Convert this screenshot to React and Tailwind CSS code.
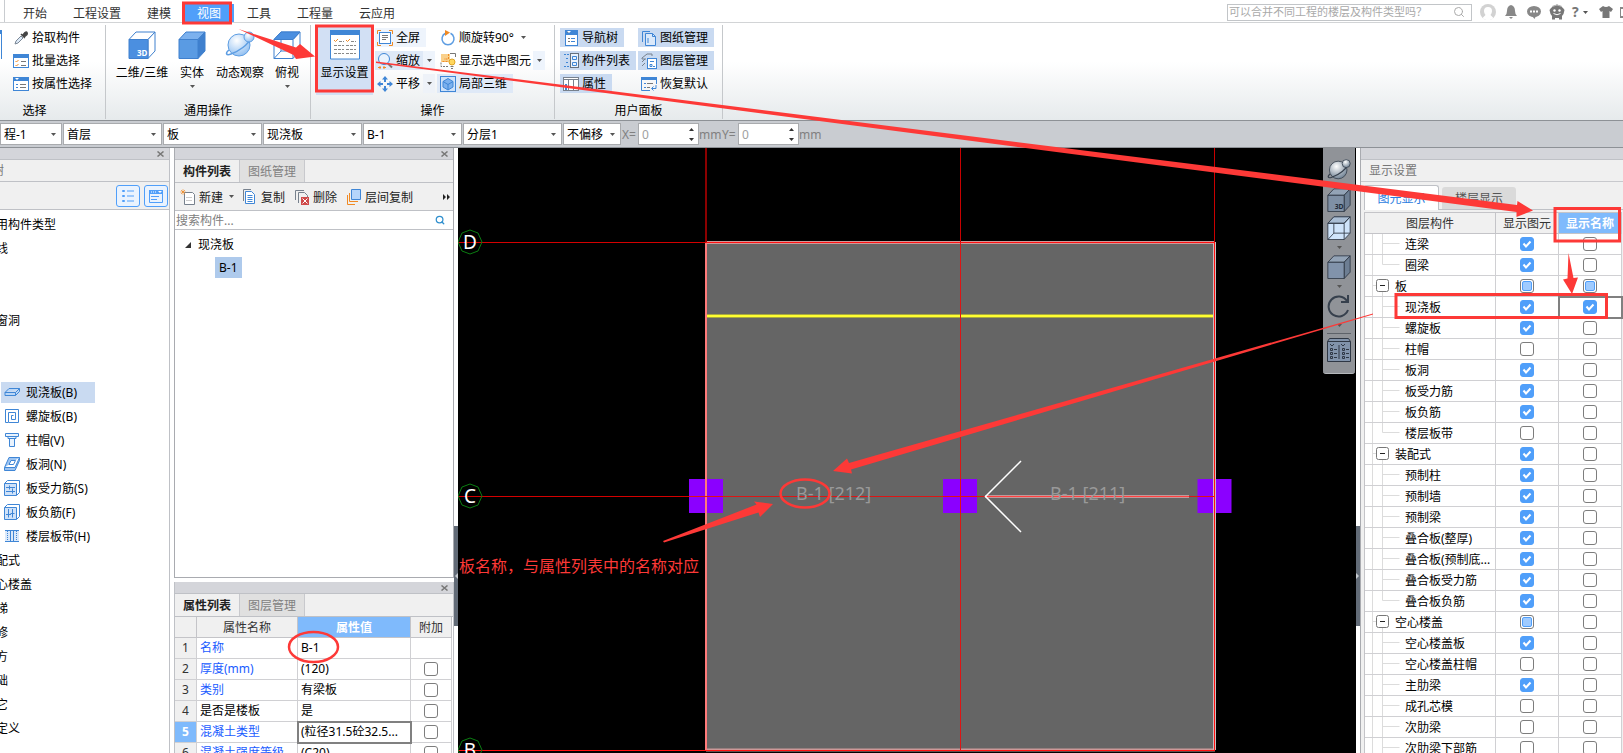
import React from "react";
import { Search } from "lucide-react";

const RED = "#fd3937";

/* ---------- small shared pieces ---------- */

const Ico = ({ s = 16, box = 16, children }) => (
  <svg
    width={s}
    height={s}
    viewBox={`0 0 ${box} ${box}`}
    fill="none"
    stroke="#3f86d6"
    className="shrink-0"
    aria-hidden="true"
  >
    {children}
  </svg>
);

const Caret = ({ className = "" }) => (
  <svg width="5" height="3" viewBox="0 0 5 3" className={`shrink-0 ${className}`} aria-hidden="true">
    <path d="M0 0h5L2.500 3z" fill="#555" />
  </svg>
);

/* value: "on" | "off" | "part" */
const Tick = ({ value, label }) => (
  <label className="relative mx-auto block size-[14px]">
    <input
      type="checkbox"
      aria-label={label}
      defaultChecked={value === "on"}
      className="peer block size-[14px] appearance-none rounded-[3px] border border-[#7d7d7d] bg-white checked:border-[#509ffa] checked:bg-[#509ffa]"
    />
    <svg
      viewBox="0 0 14 14"
      className="pointer-events-none absolute inset-0 hidden size-[14px] peer-checked:block"
      aria-hidden="true"
    >
      <path d="M3.500 6.500l2.500 3 4.500-5" fill="none" stroke="#fff" strokeWidth="2" />
    </svg>
    {value === "part" && (
      <span className="pointer-events-none absolute inset-[2px] rounded-[2px] border border-[#509ffa] bg-[#9fcbff]" />
    )}
  </label>
);

/* ---------- icons ---------- */

const Dropper = () => (
  <Ico>
    <path d="M2 14l1-3 5-5 2 2-5 5z" fill="#dce9f7" stroke="#7c8896" />
    <path d="M8 4l4 4M9.500 5.500L12 2.500q1.500-1 2 .0t0 2L11 7z" fill="#444" stroke="#444" strokeWidth="1.500" />
  </Ico>
);

const BatchPick = () => (
  <Ico>
    <rect x=".5" y="1.500" width="15" height="13" fill="#fff" />
    <rect x="0" y="1" width="16" height="4" fill="#3f86d6" stroke="none" />
    <path d="M2.500 8l1 1 2-2M2.500 12l1 1 2-2" stroke="#f08a24" />
    <path d="M8 8.500h5M8 12.500h5" stroke="#777" />
  </Ico>
);

const PropPick = () => (
  <Ico>
    <rect x=".5" y="1.500" width="15" height="13" fill="#fff" />
    <rect x="0" y="1" width="16" height="4" fill="#3f86d6" stroke="none" />
    <path d="M2 2h4L4 4z" fill="#fff" stroke="none" />
    <path d="M3 8.500h2M3 11.500h2" />
    <path d="M7 8.500h6M7 11.500h6" stroke="#777" />
  </Ico>
);

const Cube = ({ s = 28, front = "#5a9be3", side = "#3f80ce", top = "#7cb1ee", line = "#3f80ce", text, textColor = "#fff" }) => (
  <svg width={s} height={s} viewBox="0 0 28 28" className="shrink-0" aria-hidden="true">
    <path d="M1 8.500L8 1h19l-7 7.500z" fill={top} stroke={line} />
    <path d="M20 8.500L27 1v19l-7 7.500z" fill={side} stroke={line} />
    <path d="M1 8.500h19v19H1z" fill={front} stroke={line} />
    {text && (
      <text x="9" y="25" fontSize="8" fontWeight="700" fill={textColor}>
        {text}
      </text>
    )}
  </svg>
);

const WireCube = ({ s = 28, line = "#3f80ce", fill = "#fff", top = "#4b8fe0" }) => (
  <svg width={s} height={s} viewBox="0 0 28 28" fill="none" stroke={line} className="shrink-0" aria-hidden="true">
    <path d="M1 8.500L8 1h19v19l-7 7.500H1z" fill={fill} />
    <path d="M1 8.500L8 1h19l-7 7.500z" fill={top} />
    <path d="M1 8.500h19v19M8 9v11h12M8 20l-7 7.500M20 8.500L27 1M20 20h7" />
  </svg>
);

const Orbit = ({ s = 30, dark = false }) => (
  <svg width={s} height={s} viewBox="0 0 30 30" fill="none" className="shrink-0" aria-hidden="true">
    <defs>
      <radialGradient id={dark ? "orbD" : "orbL"} cx=".4" cy=".3" r=".8">
        <stop offset="0" stopColor="#fff" />
        <stop offset="1" stopColor={dark ? "#5f7387" : "#86b9f0"} />
      </radialGradient>
    </defs>
    <circle cx="14" cy="15" r="11" fill={dark ? "url(#orbD)" : "url(#orbL)"} stroke={dark ? "#36404d" : "#5d9de2"} />
    <path d="M4 20c-4 3-3 6 2 4 8-3 17-9 20-16" stroke={dark ? "#36404d" : "#5d9de2"} strokeWidth="1.500" />
    <circle cx="24" cy="7" r="5" fill={dark ? "url(#orbD)" : "url(#orbL)"} stroke={dark ? "#36404d" : "#5d9de2"} />
  </svg>
);

const DisplaySetup = () => (
  <svg width="30" height="30" viewBox="0 0 30 30" fill="none" className="shrink-0" aria-hidden="true">
    <path d="M.5 1h29v28H.5z" fill="#fff" stroke="#3f86d6" />
    <path d="M0 0h30v5H0z" fill="#3f86d6" />
    <path d="M4 10l1.500 1.500L8 9M16 10l1.500 1.500L20 9" stroke="#f08a24" />
    <path d="M9 11.500h5M21 11.500h5M4 15.500h10M16 15.500h10M4 19.500h10M16 19.500h10M4 23.500h10M16 23.500h10" stroke="#888" strokeDasharray="3 1" />
  </svg>
);

const FullScreen = () => (
  <Ico>
    <path d="M.5 4V.5H4M12 .5h3.500V4M15.500 12v3.500H12M4 15.500H.5V12" stroke="#f08a24" />
    <rect x="2.500" y="2.500" width="11" height="11" fill="#fff" />
    <path d="M5 5.500h6M5 7.500h6M5 9.500h4" stroke="#777" />
  </Ico>
);
const Zoomer = () => (
  <Ico>
    <circle cx="7" cy="6" r="5.500" fill="#eaf3fd" />
    <path d="M11 10.500l4 4" stroke="#777" strokeWidth="2" />
    <path d="M1 14.500h3M6 14.500h3M3 13v3M7 13v3" stroke="#f08a24" />
  </Ico>
);
const Pan = () => (
  <Ico>
    <path d="M8 0l3 3.500H5zM8 16l3-3.500H5zM0 8l3.500-3v6zM16 8l-3.500-3v6z" fill="#3f86d6" stroke="none" />
    <path d="M8 3v3M8 10v3M3 8h3M10 8h3" strokeWidth="2" />
  </Ico>
);
const Rotate = () => (
  <Ico>
    <path d="M10.500 3.300a6 6 0 1 1-5 0" strokeWidth="1.500" stroke="#5d9de2" />
    <path d="M5 0l5 2.500L5 6z" fill="#f08a24" stroke="none" />
  </Ico>
);
const ShowPicked = () => (
  <Ico>
    <path d="M1 9.500v4h8" stroke="#777" strokeDasharray="2 1" />
    <path d="M1 1h9v8H1z" fill="#f9d08b" stroke="none" />
    <path d="M8.500 1v5H4M2.500 8.500h5" stroke="#f08a24" strokeDasharray="2 1" />
    <path d="M10 .5h5.500V4" stroke="#777" />
    <circle cx="12" cy="9" r="3" fill="#ffd75e" stroke="#e0a526" />
    <path d="M10.500 13.500h3M11 15.500h2" stroke="#777" />
  </Ico>
);
const Local3d = () => (
  <Ico>
    <rect x=".5" y=".5" width="15" height="15" fill="#cfe2f9" />
    <path d="M8 2.500l5 3v5.500l-5 3-5-3V5.500z" fill="#7cb1ee" />
    <path d="M3 5.500l5 3 5-3M8 8.500V14" />
  </Ico>
);
const NavTree = () => (
  <Ico>
    <rect x="2.500" y=".5" width="12" height="15" fill="#fff" />
    <rect x="2" y="0" width="13" height="5" fill="#3f86d6" stroke="none" />
    <path d="M4 2h2M5 8.500h2M5 11.500h2" stroke="#777" />
    <path d="M8 8.500h4M8 11.500h4" />
    <path d="M4 1h4L6 3z" fill="#fff" stroke="none" />
  </Ico>
);
const PartList = () => (
  <Ico>
    <path d="M1 1.500h5M3 5.500h3M3 9.500h3M1 13.500h5" strokeDasharray="2 1" />
    <rect x="7.500" y=".5" width="8" height="14" fill="#eaf3fd" stroke="#66717e" />
    <path d="M9.500 3.500h4v3h-4zM9.500 9.500h4v3h-4z" stroke="#3f86d6" />
  </Ico>
);
const PropIcon = () => (
  <Ico>
    <rect x=".5" y="1.500" width="15" height="13" fill="#fff" stroke="#77818d" />
    <path d="M0 3.500h16M5.500 4v10M10.500 4v10" stroke="#77818d" />
    <path d="M3 8v6" strokeWidth="2" />
  </Ico>
);
const Sheets = () => (
  <Ico>
    <path d="M1.500 12V1.500H9" />
    <path d="M4.500 3.500h7l3 3v9h-10z" fill="#dbe9fa" />
    <path d="M11.500 3.500v3h3M7 8v5" />
  </Ico>
);
const Layers = () => (
  <Ico>
    <path d="M1 5l5-4h5v2M1 9l3-3M1 13l3-3M1 5v1h4" stroke="#77818d" />
    <rect x="6.500" y="5.500" width="9" height="10" fill="#fff" />
    <path d="M9 8.500h4M9 11.500h2v2H9zM12 13.500h2" />
  </Ico>
);
const Restore = () => (
  <Ico>
    <path d="M.5 14.500v-13h15V8" />
    <path d="M0 1h16v3H0z" fill="#3f86d6" stroke="none" />
    <path d="M3 7.500h2M3 11.500h2M.5 14.500H9" />
    <path d="M6 7.500h6M6 11.500h3" stroke="#777" />
    <path d="M15 9v3.500h-4M12.500 10.500l-2 2 2 2" />
  </Ico>
);

/* ---------- top tabs ---------- */

const TABS = ["开始", "工程设置", "建模", "视图", "工具", "工程量", "云应用"];

const TopBar = () => (
  <header className="flex h-[23px] shrink-0 items-end border-b border-[#d2d4d6] bg-white pl-1">
    <nav className="flex h-full items-end border-l border-[#c9ccd0] pl-[5px]">
      {TABS.map((t) => (
        <button
          key={t}
          className={
            t === "视图"
              ? "h-[18px] bg-[#509ffa] px-[13px] pt-px leading-[17px] text-white"
              : "h-[18px] px-[13px] pt-px leading-[17px] text-[#333]"
          }
        >
          {t}
        </button>
      ))}
    </nav>

    <div className="ml-auto flex h-full items-center pt-0.5">
      <label className="mr-2 flex h-[17px] w-[245px] items-center border border-[#c2c5c8] pr-1.5 pl-px">
        <input
          aria-label="搜索"
          placeholder="可以合并不同工程的楼层及构件类型吗？"
          className="min-w-0 flex-1 text-[11px] leading-[14px] outline-none placeholder:text-[#a9a9a9]"
        />
        <Search size={12} color="#aaa" />
      </label>

      <div className="flex items-center gap-[7px]">
        <svg width="16" height="16" viewBox="0 0 16 16" aria-hidden="true">
          <circle cx="8" cy="8" r="8" fill="#d2d2d2" />
          <path d="M4 7a4 4 0 0 1 8 0c0 2-1 3-1.500 4l3 3a8 8 0 0 1-11 0l3-3C5 10 4 9 4 7z" fill="#fff" />
        </svg>
        <svg width="16" height="16" viewBox="0 0 16 16" fill="#888" aria-hidden="true">
          <path d="M8 1q4 1 4 6 0 3 2 5H2q2-2 2-5 0-5 4-6zM6 13h4l-2 2z" />
        </svg>
        <svg width="16" height="16" viewBox="0 0 16 16" aria-hidden="true">
          <ellipse cx="8" cy="7.500" rx="7" ry="5.500" fill="#888" />
          <path d="M6 12l2.500 3 1.500-3z" fill="#888" />
          <path d="M4 6.500h2v2H4zM7 6.500h2v2H7zM10 6.500h2v2h-2z" fill="#fff" />
        </svg>
        <svg width="16" height="16" viewBox="0 0 16 16" aria-hidden="true">
          <path d="M2 4q6-7 12 0l1.500 2-1 4-1.500 2v3.500h-3V14H6v1.500H3V12L1.500 10 .5 6z" fill="#777" />
          <path d="M3 2.500q5-3 10 0" stroke="#bbb" fill="none" />
          <circle cx="5.500" cy="6.500" r="1.200" fill="#fff" />
          <circle cx="10.500" cy="6.500" r="1.200" fill="#fff" />
          <path d="M4.500 9.500q3.500 2.500 7 0" stroke="#fff" fill="none" />
        </svg>
        <span className="flex w-4 items-center gap-1 text-[14px] font-bold leading-4 text-[#777]">
          ?<Caret />
        </span>
        <svg width="14" height="14" viewBox="0 0 14 14" fill="#777" className="ml-1" aria-hidden="true">
          <path d="M4 1q3 2 6 0l4 3-2 3-1.500-1v7h-7V6L2 7 0 4z" />
        </svg>
        <span className="h-[11px] w-[3px] border-y-2 border-l border-[#888]" />
      </div>
    </div>
  </header>
);

/* ---------- ribbon ---------- */

const Group = ({ title, className, children }) => (
  <section className={`flex shrink-0 flex-col border-r border-[#c5c8cb] ${className}`}>
    <div className="flex h-[78px]">{children}</div>
    <h2 className="text-center leading-4">{title}</h2>
  </section>
);

const BigBtn = ({ icon, label, caret, className = "" }) => (
  <button className={`flex flex-col items-center ${className}`}>
    <span className="flex h-10 items-center justify-center">{icon}</span>
    <span className="leading-4 whitespace-nowrap">{label}</span>
    {caret && <Caret className="mt-1" />}
  </button>
);

const SmallBtn = ({ icon, label, className = "" }) => (
  <button className={`flex h-[19px] items-center gap-[3px] leading-[19px] whitespace-nowrap ${className}`}>
    {icon}
    {label}
  </button>
);

const DropBtn = ({ label, className = "" }) => (
  <button aria-label={label} className={`flex h-[19px] w-3 items-center justify-center ${className}`}>
    <Caret />
  </button>
);

const Ribbon = () => (
  <div className="flex h-[97px] shrink-0 bg-linear-to-b from-white from-40% to-[#e6eaec] pt-0.5 pb-px">
    <Group title="选择" className="w-[106px] pr-9">
      <span className="mt-[5px] h-[29px] w-0.5 shrink-0 border-t-4 border-r border-[#3f86d6] bg-white" />
      <div className="flex flex-col gap-1 pt-[3px] pl-[11px]">
        <SmallBtn icon={<Dropper />} label="拾取构件" />
        <SmallBtn icon={<BatchPick />} label="批量选择" />
        <SmallBtn icon={<PropPick />} label="按属性选择" />
      </div>
    </Group>

    <Group title="通用操作" className="w-[205px]">
      <BigBtn className="ml-[9px] w-[54px]" icon={<Cube front="#4b8fe0" side="#fff" top="#fff" text="3D" />} label="二维/三维" />
      <BigBtn className="ml-[9px] w-[28px]" icon={<Cube />} label="实体" caret />
      <BigBtn className="ml-[9px] w-[50px]" icon={<Orbit />} label="动态观察" />
      <BigBtn className="ml-[8px] w-[28px]" icon={<WireCube />} label="俯视" caret />
    </Group>

    <Group title="操作" className="w-[244px]">
      <BigBtn className="ml-[5px] h-[70px] w-[57px] bg-[#d2e0f4]" icon={<DisplaySetup />} label="显示设置" />
      <div className="ml-0.5 flex w-[60px] flex-col gap-1 pt-[3px]">
        <SmallBtn className="w-[51px] bg-[#eef4fc] pl-0.5" icon={<FullScreen />} label="全屏" />
        <div className="flex">
          <SmallBtn className="w-12 bg-[#dfe9f7] pl-0.5" icon={<Zoomer />} label="缩放" />
          <DropBtn label="缩放选项" className="bg-[#eef4fc]" />
        </div>
        <div className="flex">
          <SmallBtn className="w-12 pl-0.5" icon={<Pan />} label="平移" />
          <DropBtn label="平移选项" className="bg-[#eef2f8]" />
        </div>
      </div>
      <div className="ml-0.5 flex flex-col gap-1 pt-[3px]">
        <div className="flex">
          <SmallBtn className="pl-[3px]" icon={<Rotate />} label="顺旋转90°" />
          <DropBtn label="旋转选项" className="ml-1" />
        </div>
        <div className="flex">
          <SmallBtn className="w-[96px] pl-[3px]" icon={<ShowPicked />} label="显示选中图元" />
          <DropBtn label="图元选项" className="bg-[#eef4fc]" />
        </div>
        <SmallBtn className="w-[76px] bg-[#dfe9f7] pl-[3px]" icon={<Local3d />} label="局部三维" />
      </div>
    </Group>

    <Group title="用户面板" className="w-[168px]">
      <div className="ml-[5px] flex w-[78px] flex-col items-start gap-1 pt-[3px]">
        <SmallBtn className="bg-[#c9daf1] pr-[6px] pl-[3px]" icon={<NavTree />} label="导航树" />
        <SmallBtn className="bg-[#c9daf1] pr-[6px] pl-[3px]" icon={<PartList />} label="构件列表" />
        <SmallBtn className="bg-[#c9daf1] pr-[6px] pl-[3px]" icon={<PropIcon />} label="属性" />
      </div>
      <div className="flex flex-col items-start gap-1 pt-[3px]">
        <SmallBtn className="bg-[#c9daf1] pr-[6px] pl-[3px]" icon={<Sheets />} label="图纸管理" />
        <SmallBtn className="bg-[#c9daf1] pr-[6px] pl-[3px]" icon={<Layers />} label="图层管理" />
        <SmallBtn className="pr-[6px] pl-[3px]" icon={<Restore />} label="恢复默认" />
      </div>
    </Group>
  </div>
);

/* ---------- option bar ---------- */

const Pick = ({ label, value, className = "w-[99px]" }) => (
  <label className={`relative mr-px block shrink-0 ${className}`}>
    <select
      aria-label={label}
      className="block h-[22px] w-full appearance-none border border-[#a9abae] bg-white pt-px pl-[3px] leading-[19px] outline-none"
    >
      <option>{value}</option>
    </select>
    <Caret className="pointer-events-none absolute top-[10px] right-[6px]" />
  </label>
);

const Offset = ({ axis }) => (
  <label className="flex items-center text-[#808080]">
    <span className="w-4 pt-px whitespace-nowrap">{axis}=</span>
    <span className="flex h-[22px] w-[61px] items-center border border-[#a9abae] bg-white pr-1 pl-[3px]">
      <input defaultValue="0" disabled className="w-0 min-w-0 flex-1 pt-px text-[#a0a0a0]" />
      <svg width="5" height="13" viewBox="0 0 5 13" fill="#333" aria-hidden="true">
        <path d="M0 3h5L2.500 0zM0 10h5L2.500 13z" />
      </svg>
    </span>
    <span className="w-[23px] pt-px">mm</span>
  </label>
);

const OptionBar = () => (
  <div className="flex h-7 shrink-0 items-center overflow-hidden border-y border-[#8d9196] bg-[#c9ccd1]">
    <Pick label="工程" value="程-1" className="w-[62px]" />
    <Pick label="楼层" value="首层" />
    <Pick label="类别" value="板" />
    <Pick label="类型" value="现浇板" />
    <Pick label="构件" value="B-1" />
    <Pick label="分层" value="分层1" />
    <Pick label="偏移" value="不偏移" className="w-[58px]" />
    <Offset axis="X" />
    <Offset axis="Y" />
  </div>
);

/* ---------- left navigation ---------- */

const Slab = () => (
  <Ico><path d="M1 8.500l4-4h10.500v3l-4 4H1zM1 8.500h10.500l4-4M11.500 8.500v3" fill="#b9d6f7" /></Ico>
);
const Spiral = () => (
  <Ico>
    <path d="M4 14.500H1.500v-13h13v13H4.500V4.500h7v7H7.500v-4h2" />
  </Ico>
);
const Cap = () => (
  <Ico><path d="M1.500 1.500h13v3h-13zM4 4.500v2h8v-2M5.500 6.500v8h5v-8" fill="#eaf3fd" /></Ico>
);
const Hole = () => (
  <Ico>
    <path d="M5 1.500h10.500L11 11.500H.5zM.5 11.500v3H11l4.500-10v-3" fill="#9cc4f2" />
    <path d="M7 4.500h4.500l-2 4H5z" fill="#fff" />
  </Ico>
);
const BarS = () => (
  <Ico>
    <path d="M.5 3.500l3-3h12v12l-3 3" />
    <path d="M.5 3.500h12v12H.5z" fill="#cfe2f9" />
    <path d="M2 7.500h9M2 11.500h9M5.500 5.500v4M8.500 8.500v5" />
  </Ico>
);
const BarF = () => (
  <Ico>
    <path d="M.5 3.500l3-3h12v12l-3 3" />
    <path d="M.5 3.500h12v12H.5z" fill="#cfe2f9" />
    <path d="M4.500 5v8.500M8.500 5v8.500M2 10.500h5M6.500 9.500h4" />
  </Ico>
);
const Band = () => (
  <Ico>
    <path d="M1 2.500h14v11H1z" fill="#dbe9fa" stroke="none" />
    <path d="M1 2.500h14M1 13.500h14M6.500 3v10M9.500 3v10" />
    <path d="M3.500 3v10M12.500 3v10" strokeDasharray="1 1" />
  </Ico>
);

const NAV = [
  { t: "用构件类型" },
  { t: "线" },
  {},
  {},
  { t: "窗洞" },
  {},
  {},
  { t: "现浇板(B)", icon: <Slab />, on: true },
  { t: "螺旋板(B)", icon: <Spiral /> },
  { t: "柱帽(V)", icon: <Cap /> },
  { t: "板洞(N)", icon: <Hole /> },
  { t: "板受力筋(S)", icon: <BarS /> },
  { t: "板负筋(F)", icon: <BarF /> },
  { t: "楼层板带(H)", icon: <Band /> },
  { t: "配式" },
  { t: "心楼盖" },
  { t: "梯" },
  { t: "修" },
  { t: "方" },
  { t: "础" },
  { t: "它" },
  { t: "定义" },
];

const CloseStrip = () => (
  <div className="flex h-3 shrink-0 items-center justify-end border-b border-[#bfc1c6] bg-[#d4d5da] pr-[5px]">
    <button aria-label="关闭">
      <svg width="7" height="6" viewBox="0 0 7 6" stroke="#777" strokeWidth="1.500" aria-hidden="true">
        <path d="M.5.5l6 5M6.500.5l-6 5" />
      </svg>
    </button>
  </div>
);

const NavPanel = () => (
  <aside className="flex w-[170px] shrink-0 flex-col overflow-hidden border-r border-[#bfc1c6] bg-white">
    <CloseStrip />
    <div className="h-[22px] shrink-0 border-b border-[#bfc1c6] bg-[#f0f0f0] leading-[22px] text-[#777]">
      <span className="-ml-2 inline-block">树</span>
    </div>
    <div className="flex h-7 shrink-0 items-center justify-end gap-1 border-b border-[#bfc1c6] bg-[#f0f0f0] pr-px">
      <button aria-label="列表视图" className="grid h-[22px] w-6 place-items-center rounded-[3px] border border-[#509ffa] bg-[#eaf3fe]">
        <Ico>
          <path d="M2.500 2.500h2v1h-2zM2.500 7.500h2v1h-2zM2.500 12.500h2v1h-2zM7 3h7M7 8h7M7 13h7" stroke="#509ffa" />
        </Ico>
      </button>
      <button aria-label="卡片视图" className="grid h-[22px] w-6 place-items-center rounded-[3px] border border-[#509ffa] bg-[#eaf3fe]">
        <Ico>
          <path d="M1.500 2.500h13v12h-13z" stroke="#509ffa" />
          <path d="M1 2h14v4H1z" fill="#509ffa" stroke="none" />
          <path d="M3 4h1M5 4h1M7 4h1" stroke="#fff" />
          <path d="M10 3h4l-2 2z" fill="#fff" stroke="none" />
          <path d="M3 8.500h8M3 11.500h6" stroke="#509ffa" />
        </Ico>
      </button>
    </div>
    <ul className="pt-0.5">
      {NAV.map((n, i) => (
        <li key={i} className="flex h-6 items-center pl-px whitespace-nowrap">
          {n.icon ? (
            <button
              className={`flex h-[21px] items-center gap-[6px] pl-[3px] ${n.on ? "w-[94px] bg-[#c9daf1]" : ""}`}
            >
              {n.icon}
              <span className="pt-0.5">{n.t}</span>
            </button>
          ) : (
            <span className="-ml-[5px] pt-0.5">{n.t}</span>
          )}
        </li>
      ))}
    </ul>
  </aside>
);

/* ---------- component list + property list ---------- */

const PanelTabs = ({ tabs }) => (
  <div className="flex h-[23px] shrink-0 border-b border-[#bfc1c6] bg-[#f0f0f0]">
    {tabs.map((t, i) => (
      <button
        key={t}
        className={
          i === 0
            ? "w-[65px] border-r border-[#c8c9cd] pt-px font-bold text-[#222]"
            : "w-[65px] border-r border-[#c8c9cd] bg-[#e0e0e0] pt-px text-[#808080]"
        }
      >
        {t}
      </button>
    ))}
  </div>
);

const ToolBtn = ({ icon, label, className = "" }) => (
  <button className={`flex items-center gap-[3px] whitespace-nowrap text-[#222] ${className}`}>
    {icon}
    <span className="pt-0.5">{label}</span>
  </button>
);

const ComponentList = () => (
  <section className="flex h-[430px] shrink-0 flex-col border border-t-0 border-[#a9abb0] bg-white">
    <CloseStrip />
    <PanelTabs tabs={["构件列表", "图纸管理"]} />
    <div className="flex h-7 shrink-0 items-center border-b border-[#bfc1c6] bg-[#f0f0f0] pl-[5px]">
      <ToolBtn
        label="新建"
        icon={
          <Ico>
            <path d="M4.500 3.500h8l2 2v10h-10z" fill="#fff" stroke="#77818d" />
            <path d="M6 8.500h6M6 11.500h6" stroke="#ccc" />
            <path d="M3 .5v5M.5 3h5M1 1l4 4M5 1L1 5" stroke="#f08a24" strokeDasharray="1 .5" />
          </Ico>
        }
      />
      <Caret className="mx-[6px]" />
      <ToolBtn
        className="ml-0.5"
        label="复制"
        icon={
          <Ico>
            <path d="M1.500 12V.5H9" stroke="#77818d" />
            <path d="M3.500 2.500h6l3 3v9h-9z" fill="#fff" />
            <path d="M5.500 6.500h5M5.500 8.500h5M5.500 10.500h5M5.500 12.500h5" />
          </Ico>
        }
      />
      <ToolBtn
        className="ml-[9px]"
        label="删除"
        icon={
          <Ico>
            <path d="M1.500 11V1.500H10M4.500 14V3.500h6l3 3V8" stroke="#77818d" />
            <path d="M7 8h8v8H7z" fill="#cf4a4a" stroke="none" />
            <path d="M8.500 9.500l5 5M13.500 9.500l-5 5" stroke="#fff" />
          </Ico>
        }
      />
      <ToolBtn
        className="ml-[9px]"
        label="层间复制"
        icon={
          <Ico>
            <path d="M1.500 6v9.500H9M3.500 4v8.500H12" stroke="#f08a24" />
            <path d="M5.500.5h9v10h-9z" fill="#b5d5fb" />
          </Ico>
        }
      />
      <svg width="7" height="6" viewBox="0 0 7 6" fill="#222" className="mr-[3px] ml-auto" aria-hidden="true">
        <path d="M0 0l3 3-3 3zM4 0l3 3-3 3z" />
      </svg>
    </div>
    <label className="flex h-[19px] shrink-0 items-center border-b border-[#bfc1c6] pr-2 pl-px">
      <input
        aria-label="搜索构件"
        placeholder="搜索构件..."
        className="min-w-0 flex-1 pt-0.5 outline-none placeholder:text-[#808080]"
      />
      <Search size={10} color="#2f8fce" strokeWidth={3} />
    </label>
    <div className="pt-[3px]">
      <div className="flex h-6 items-center gap-[7px] pl-[10px]">
        <svg width="6" height="6" viewBox="0 0 6 6" aria-hidden="true">
          <path d="M6 0v6H0z" fill="#333" />
        </svg>
        现浇板
      </div>
      <div className="flex h-6 items-start pl-10">
        <span className="h-[21px] bg-[#aecaec] px-1 leading-[21px]">B-1</span>
      </div>
    </div>
  </section>
);

const PROPS = [
  { n: "名称", v: "B-1", blue: true, none: true },
  { n: "厚度(mm)", v: "(120)", blue: true },
  { n: "类别", v: "有梁板", blue: true },
  { n: "是否是楼板", v: "是" },
  { n: "混凝土类型", v: "(粒径31.5砼32.5...", blue: true, on: true },
  { n: "混凝土强度等级", v: "(C20)", blue: true },
];

const PropertyList = () => (
  <section className="mt-1 flex min-h-0 flex-1 flex-col overflow-hidden border border-y-0 border-[#bfc1c6] bg-white">
    <CloseStrip />
    <PanelTabs tabs={["属性列表", "图层管理"]} />
    <table className="w-[277px] table-fixed border-separate border-spacing-0">
      <colgroup>
        <col className="w-[22px]" />
        <col className="w-[101px]" />
        <col className="w-[113px]" />
        <col className="w-[41px]" />
      </colgroup>
      <thead>
        <tr className="h-[21px] bg-[#f0f0f0] text-[#333] [&>th]:border-r [&>th]:border-b [&>th]:border-[#c4c4c8] [&>th]:p-0 [&>th]:pt-px [&>th]:leading-4 [&>th]:font-normal">
          <th />
          <th>属性名称</th>
          <th className="bg-[#7fbafc] text-white">
            <b>属性值</b>
          </th>
          <th>附加</th>
        </tr>
      </thead>
      <tbody>
        {PROPS.map((p, i) => (
          <tr
            key={p.n}
            className="h-[21px] [&>td]:border-r [&>td]:border-b [&>td]:border-[#d0d0d3] [&>td]:p-0 [&>td]:leading-4 [&>td]:whitespace-nowrap"
          >
            <td className={p.on ? "bg-[#7fbafc] text-center font-bold text-white" : "bg-[#f0f0f0] text-center text-[#333]"}>
              {i + 1}
            </td>
            <td className={p.blue ? "text-[#1a5cff]" : ""}>
              <span className="pl-[3px]">{p.n}</span>
            </td>
            <td className={p.on ? "outline-2 -outline-offset-1 outline-[#808080]" : ""}>
              <span className="pl-[3px]">{p.v}</span>
            </td>
            <td>{!p.none && <Tick value="off" label={`附加 ${p.n}`} />}</td>
          </tr>
        ))}
      </tbody>
    </table>
  </section>
);

/* ---------- drawing area ---------- */

const AxisMark = ({ y, name }) => (
  <g>
    <path
      d={`M12 ${y - 12}l8 3 4 9-4 9-8 3-8-3-4-9 4-9z`}
      fill="none"
      stroke="#0b7d12"
    />
    <text x="12" y={y + 7} fontSize="19" fill="#fff" textAnchor="middle">
      {name}
    </text>
  </g>
);

const Model = () => (
  <svg className="absolute inset-0 size-full" aria-label="楼板平面">
    <rect x="248" y="94" width="509" height="508" fill="#656565" />
    <path d="M248 168h509" stroke="#a8a840" strokeWidth="4" />
    <path d="M248 168h509" stroke="#ffff30" strokeWidth="2" />

    <path d="M231 331h34v34h-34zM485 331h34v34h-34zM739.500 331h34v34h-34z" fill="#8b00ff" />

    {/* slab outline */}
    <path d="M248 94.500h509M248 602h509" stroke="#c99" strokeWidth="3" />
    <path d="M756.500 94v508" stroke="#cbb" strokeWidth="3" />
    <path d="M248 94v508" stroke="#ff7a7a" strokeWidth="2" />

    {/* axes */}
    <path d="M248 0v94" stroke="#8b0000" strokeWidth="2" />
    <path d="M502.500 0v94M756.500 0v94" stroke="#c80000" />
    <path d="M0 94.500h248M0 348.500h231" stroke="#d40000" />
    <path d="M248 94.500h509M0 602.500h757M756.500 94v508" stroke="#ff1010" />
    <path d="M231 348.500h525M502.500 94v508" stroke="#dd1515" />

    {/* span arrow */}
    <path d="M527 348.500h204" stroke="#c09a9a" strokeWidth="3" />
    <path d="M527 348.500h204" stroke="#ff4040" />
    <path d="M563 313l-35.500 35.500L563 384" stroke="#fff" strokeWidth="1.500" fill="none" />

    <text x="338" y="352" fontSize="18" fill="#999">B-1 [212]</text>
    <text x="592" y="352" fontSize="18" fill="#999">B-1 [211]</text>

    <AxisMark y={94} name="D" />
    <AxisMark y={348} name="C" />
    <AxisMark y={602} name="B" />
  </svg>
);

const ViewTools = () => (
  <div className="absolute top-0 right-px flex w-8 flex-col items-center rounded-b-[3px] border-b border-[#b5b8bc] bg-[#909398] pt-[10px] pb-[11px]">
    <button aria-label="动态观察"><Orbit s={24} dark /></button>
    <button aria-label="三维" className="mt-[6px]">
      <Cube s={24} front="#7f90a5" side="#6d7e93" top="#93a3b6" line="#2e3744" text="3D" textColor="#222b38" />
    </button>
    <button aria-label="俯视" className="mt-1"><WireCube s={24} line="#2e3744" fill="#cfe4fb" top="#a9bdd4" /></button>
    <Caret className="mt-[6px]" />
    <button aria-label="实体" className="mt-[6px]">
      <Cube s={24} front="#8193ab" side="#6d7e93" top="#93a3b6" line="#2e3744" />
    </button>
    <Caret className="mt-[6px]" />
    <button aria-label="旋转" className="mt-[6px]">
      <svg width="24" height="24" viewBox="0 0 24 24" fill="none" stroke="#36404d" strokeWidth="2" aria-hidden="true">
        <path d="M20 7A10 10 0 1 0 21 16M21 1v7h-7" />
      </svg>
    </button>
    <Caret className="mt-[6px]" />
    <hr className="mt-[6px] w-6 border-[#5d6269]" />
    <button aria-label="图层显示" className="mt-1">
      <svg width="24" height="24" viewBox="0 0 24 24" fill="none" stroke="#2e3744" aria-hidden="true">
        <path d="M.5 3.500l2-3h19l2 3v20H.5z" fill="#8193ab" />
        <path d="M.5 3.500h23M12 7v14M3 6l2 2 2-2M14 6l2 2 2-2M3.500 10.500h2v2h-2zM3.500 14.500h2v2h-2zM3.500 18.500h2v2h-2zM15.500 10.500h2v2h-2zM15.500 14.500h2v2h-2zM15.500 18.500h2v2h-2zM7 11.500h3M7 15.500h3M7 19.500h3M19 11.500h3M19 15.500h3M19 19.500h3" />
      </svg>
    </button>
  </div>
);

const Splitter = ({ dir }) => (
  <div className="w-1 shrink-0 bg-white pt-[378px]">
    <div className="flex h-[100px] items-center bg-[#626b77]">
      <svg width="4" height="6" viewBox="0 0 4 6" fill="#c5cad0" aria-hidden="true">
        <path d={dir === "left" ? "M4 0v6L1 3z" : "M0 0v6l3-3z"} />
      </svg>
    </div>
  </div>
);

/* ---------- display settings ---------- */

const LAYERS = [
  ["连梁", "on", "off"],
  ["圈梁", "on", "off", "last"],
  ["板", "part", "part", "group"],
  ["现浇板", "on", "on"],
  ["螺旋板", "on", "off"],
  ["柱帽", "off", "off"],
  ["板洞", "on", "off"],
  ["板受力筋", "on", "off"],
  ["板负筋", "on", "off"],
  ["楼层板带", "off", "off", "last"],
  ["装配式", "on", "off", "group"],
  ["预制柱", "on", "off"],
  ["预制墙", "on", "off"],
  ["预制梁", "on", "off"],
  ["叠合板(整厚)", "on", "off"],
  ["叠合板(预制底...", "on", "off"],
  ["叠合板受力筋", "on", "off"],
  ["叠合板负筋", "on", "off", "last"],
  ["空心楼盖", "part", "off", "group"],
  ["空心楼盖板", "on", "off"],
  ["空心楼盖柱帽", "off", "off"],
  ["主肋梁", "on", "off"],
  ["成孔芯模", "off", "off"],
  ["次肋梁", "off", "off"],
  ["次肋梁下部筋", "off", "off"],
];

const Branch = ({ kind }) => (
  <svg
    width={kind === "group" ? 25 : 35}
    height="20"
    fill="none"
    stroke="#dcdcdc"
    className="mr-[5px] shrink-0"
    aria-hidden="true"
  >
    <path d="M7.500 0v20" />
    {kind === "group" ? (
      <>
        <path d="M7.500 9.500h4M17.500 16v4" />
        <rect x="11.500" y="3.500" width="12" height="12" rx="2" fill="#fff" stroke="#777" />
        <path d="M15 9.500h5" stroke="#222" />
      </>
    ) : (
      <path d={kind === "last" ? "M17.500 0v9.500h17" : "M17.500 0v20M17.500 9.500h17"} />
    )}
  </svg>
);

const DisplayPanel = () => (
  <aside className="flex w-[263px] shrink-0 flex-col overflow-hidden border-l border-[#a9abb0] bg-[#f0f0f0]">
    <div className="h-3 shrink-0 border-b border-[#bfc1c6] bg-[#d4d5da]" />
    <h2 className="h-[22px] shrink-0 border-b border-[#c8c9cd] pl-2 leading-[22px] text-[#777]">显示设置</h2>
    <div className="flex h-[30px] shrink-0 flex-col pl-[3px]">
      <div className="flex h-7 items-end gap-[3px] border-b border-[#bfc1c6]">
        <button className="-mb-px h-[25px] w-[75px] rounded-t-[3px] border border-b-0 border-[#bfc1c6] bg-white pt-px text-[#2b7de0]">
          图元显示
        </button>
        <button className="h-[22px] w-[74px] rounded-t-[3px] bg-[#dadada] pt-px text-[#555]">楼层显示</button>
      </div>
    </div>
    <div className="pr-px pl-[3px]">
      <table className="w-full table-fixed border-separate border-spacing-0 border-l border-[#c4c4c8] bg-white">
        <colgroup>
          <col />
          <col className="w-[63px]" />
          <col className="w-[63px]" />
        </colgroup>
        <thead>
          <tr className="h-[22px] bg-[#f0f0f0] text-[#333] [&>th]:border-y [&>th]:border-r [&>th]:border-[#c4c4c8] [&>th]:p-0 [&>th]:pt-0.5 [&>th]:leading-4 [&>th]:font-normal">
            <th>图层构件</th>
            <th>显示图元</th>
            <th className="bg-[#7fbafc] text-white">
              <b>显示名称</b>
            </th>
          </tr>
        </thead>
        <tbody>
          {LAYERS.map(([name, shown, named, kind]) => (
            <tr
              key={name}
              className="h-[21px] [&>td]:border-r [&>td]:border-b [&>td]:border-[#d0d0d3] [&>td]:p-0"
            >
              <td>
                <div className="flex h-5 items-center leading-4 whitespace-nowrap">
                  <Branch kind={kind} />
                  <span className="pt-0.5">{name}</span>
                </div>
              </td>
              <td>
                <Tick value={shown} label={`显示图元 ${name}`} />
              </td>
              <td className={name === "现浇板" ? "outline-2 -outline-offset-1 outline-[#808080]" : ""}>
                <Tick value={named} label={`显示名称 ${name}`} />
              </td>
            </tr>
          ))}
        </tbody>
      </table>
    </div>
  </aside>
);

/* ---------- red markup drawn over everything ---------- */

const Markup = () => (
  <svg className="pointer-events-none absolute inset-0 size-full" aria-hidden="true">
    <g fill="none" stroke={RED} strokeWidth="3">
      <rect x="183.500" y="3" width="47" height="20" />
      <rect x="316.500" y="26" width="56" height="65" />
      <rect x="1555" y="208.500" width="64.500" height="32.500" />
      <rect x="1396" y="294.500" width="210.500" height="23" />
      <ellipse cx="805" cy="493.500" rx="24.500" ry="14" strokeWidth="2.500" />
      <ellipse cx="313.500" cy="647" rx="24.500" ry="15" strokeWidth="2.500" />
    </g>
    <g fill={RED}>
      <path d="M238.500 29l57.500 18.500 4-3.500 15 12.500-19 2.500-2.500-4z" />
      <path d="M376 61.500l804 101 337 42.500.5-4 15.500 9.500-16.500 6.500v-5l-337-44L376 63z" />
      <path d="M1568.500 253l5 25 4.500-.5-6 16.500-9-14.500 4.500-1z" />
      <path d="M1373 313.500L849 463l-2-4.500-14 12.500 19 2.500-1-4L1373 314.500z" />
      <path d="M663 541l93.500-36.500-2.500-3 19 2.500-13 13-1.500-4.500L664 542.500z" />
      <text x="459" y="572" fontSize="16">板名称，与属性列表中的名称对应</text>
    </g>
  </svg>
);

export default function App() {
  return (
    <div className="relative flex h-screen w-full flex-col overflow-hidden bg-white font-['Noto_Sans','Noto_Sans_CJK_SC',sans-serif] text-[12px] leading-4 text-black">
      <TopBar />
      <Ribbon />
      <OptionBar />

      <main className="flex min-h-0 flex-1">
        <NavPanel />
        <div className="ml-1 flex w-[280px] shrink-0 flex-col">
          <ComponentList />
          <PropertyList />
        </div>
        <Splitter dir="left" />
        <div className="relative min-w-0 flex-1 overflow-hidden bg-black">
          <Model />
          <ViewTools />
        </div>
        <Splitter dir="right" />
        <DisplayPanel />
      </main>

      <Markup />
    </div>
  );
}
